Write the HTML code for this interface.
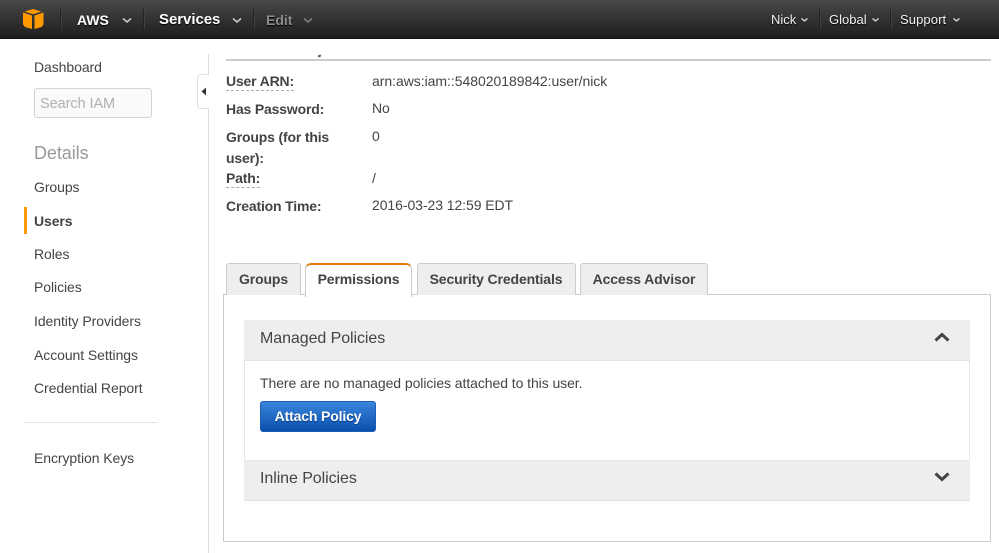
<!DOCTYPE html>
<html><head><meta charset="utf-8"><title>IAM</title>
<style>
html,body{margin:0;padding:0;background:#fff}
#p{position:relative;width:999px;height:553px;overflow:hidden;background:#fff;font-family:"Liberation Sans",Arial,sans-serif;font-size:14px;color:#444;letter-spacing:-.07px}
#p div{position:absolute;white-space:nowrap}
.t{line-height:16px}
.nav{height:38px;left:0;top:0;width:999px;background:linear-gradient(#4a4a4a 0,#3b3b3b 30%,#2a2a2a 70%,#1e1e1e 100%);border-bottom:1px solid #111}
.n{color:#fff;font-weight:bold;text-shadow:0 1px 1px #000;line-height:16px}
.r{color:#f2f2f2;font-size:13px;line-height:16px;text-shadow:0 1px 1px #000}
.sep{width:1px;top:9px;height:20px;background:#232323;border-right:1px solid #404040}
.s{left:34px;color:#444;line-height:16px}
.l{left:226px;font-weight:bold;color:#444;line-height:16px;letter-spacing:-.17px}
.v{left:372px;color:#444;line-height:16px}
.tab{top:263px;height:31px;background:#eee;border:1px solid #ccc;border-bottom:0;border-radius:3px 3px 0 0;text-align:center;font-weight:bold;line-height:30px;color:#444;letter-spacing:-.13px}
.dash{height:0;border-bottom:1px dashed #aaa}
svg{position:absolute}
</style></head><body><div id="p">

<div class="nav"></div>
<svg style="left:22px;top:8px" width="22" height="22" viewBox="22 8 22 22"><path d="M33 9 41.500 11.500 33 14.300 24.500 11.500Z" fill="#f90"/><path d="M23 12.500 32 15.500V29L25 27 23 24.500Z" fill="#f90"/><path d="M43.500 12.500 34.500 15.500V29L41.500 27 43.500 24.500Z" fill="#f90"/></svg>
<div class="sep" style="left:60px"></div>
<div class="n" style="left:77px;top:12px;letter-spacing:0">AWS</div>
<svg style="left:122px;top:17px" width="10" height="7" viewBox="0 0 10 7"><path d="M1 1.500 5 5 9 1.500" fill="none" stroke="#ccc" stroke-width="1.500"/></svg>
<div class="sep" style="left:143px"></div>
<div class="n" style="left:159px;top:12px;font-size:15px;letter-spacing:-.05px">Services</div>
<svg style="left:232px;top:17px" width="10" height="7" viewBox="0 0 10 7"><path d="M1 1.500 5 5 9 1.500" fill="none" stroke="#ccc" stroke-width="1.500"/></svg>
<div class="sep" style="left:253px"></div>
<div class="n" style="left:266px;top:12px;color:#8b8b8b;letter-spacing:0">Edit</div>
<svg style="left:303px;top:17px" width="10" height="7" viewBox="0 0 10 7"><path d="M1 1.500 5 5 9 1.500" fill="none" stroke="#808080" stroke-width="1.500"/></svg>

<div class="r" style="left:771px;top:12px;letter-spacing:0">Nick</div>
<svg style="left:801px;top:18px" width="7" height="4" viewBox="0 0 7 4"><path d="M0.500 0.500 3.500 3 6.500 0.500" fill="none" stroke="#e5e5e5" stroke-width="1.200"/></svg>
<div class="sep" style="left:819px"></div>
<div class="r" style="left:829px;top:12px;letter-spacing:0">Global</div>
<svg style="left:872px;top:18px" width="7" height="4" viewBox="0 0 7 4"><path d="M0.500 0.500 3.500 3 6.500 0.500" fill="none" stroke="#e5e5e5" stroke-width="1.200"/></svg>
<div class="sep" style="left:890px"></div>
<div class="r" style="left:900px;top:12px;letter-spacing:.1px">Support</div>
<svg style="left:953px;top:18px" width="7" height="4" viewBox="0 0 7 4"><path d="M0.500 0.500 3.500 3 6.500 0.500" fill="none" stroke="#e5e5e5" stroke-width="1.200"/></svg>

<div style="left:208px;top:54px;width:1px;height:499px;background:#ddd"></div>
<div style="left:197px;top:74px;width:11px;height:33px;background:#fff;border:1px solid #e2e2e2;border-right:0;border-radius:4px 0 0 4px"></div>
<svg style="left:201px;top:87px" width="6" height="9" viewBox="0 0 6 9"><path d="M5 0.500V8.500L0.500 4.500Z" fill="#333"/></svg>

<div class="s" style="top:59px">Dashboard</div>
<div style="left:34px;top:88px;width:116px;height:28px;border:1px solid #d4d4d4;border-radius:3px;background:#fafafa"></div>
<div class="t" style="left:40px;top:96px;color:#b0b0b0;font-size:14.500px">Search IAM</div>
<div class="t" style="left:34px;top:144px;color:#999;font-size:18px;line-height:18px">Details</div>
<div class="s" style="top:179px">Groups</div>
<div style="left:24px;top:207px;width:3px;height:27px;background:#f90"></div>
<div class="s" style="top:213px;font-weight:bold;letter-spacing:-.1px">Users</div>
<div class="s" style="top:246px">Roles</div>
<div class="s" style="top:279px">Policies</div>
<div class="s" style="top:313px">Identity Providers</div>
<div class="s" style="top:347px">Account Settings</div>
<div class="s" style="top:380px">Credential Report</div>
<div style="left:24px;top:422px;width:133px;height:0;border-top:1px dotted #ccc"></div>
<div class="s" style="top:450px">Encryption Keys</div>

<div style="left:226px;top:59px;width:765px;height:2px;background:#ccc"></div>
<div style="left:318px;top:55px;width:3px;height:2px;background:#555;transform:rotate(-25deg)"></div>

<div class="l" style="top:73px">User ARN:</div>
<div class="dash" style="left:226px;top:90px;width:68px"></div>
<div class="v" style="top:73px;letter-spacing:-.04px">arn:aws:iam::548020189842:user/nick</div>
<div class="l" style="top:101px">Has Password:</div>
<div class="v" style="top:100px">No</div>
<div class="l" style="top:129px">Groups (for this</div>
<div class="v" style="top:128px">0</div>
<div class="l" style="top:150px">user):</div>
<div class="l" style="top:170px">Path:</div>
<div class="dash" style="left:226px;top:187px;width:34px"></div>
<div class="v" style="top:170px">/</div>
<div class="l" style="top:198px">Creation Time:</div>
<div class="v" style="top:197px">2016-03-23 12:59 EDT</div>

<div style="left:223px;top:294px;width:766px;height:246px;border:1px solid #ccc;background:#fff"></div>
<div class="tab" style="left:226px;width:73px">Groups</div>
<div class="tab" style="left:305px;width:105px;height:30px;background:#fff;border-top:2px solid #e47911;line-height:28px;border-radius:6px 6px 0 0;padding-bottom:2px">Permissions</div>
<div class="tab" style="left:417px;width:157px;text-indent:-1px">Security Credentials</div>
<div class="tab" style="left:580px;width:126px">Access Advisor</div>

<div style="left:244px;top:320px;width:724px;height:180px;border:1px solid #e8e8e8;border-top:0;border-bottom:0;background:#fff"></div>
<div style="left:244px;top:320px;width:726px;height:40px;background:#eee;border-bottom:1px solid #e2e2e2"></div>
<div class="t" style="left:260px;top:330px;font-size:16px;line-height:18px;color:#444">Managed Policies</div>
<svg style="left:934px;top:331px" width="16" height="12" viewBox="0 0 16 12"><path d="M1.500 9.500 8 3.500 14.500 9.500" fill="none" stroke="#444" stroke-width="3"/></svg>
<div class="t" style="left:260px;top:375px;color:#444">There are no managed policies attached to this user.</div>
<div style="left:260px;top:401px;width:114px;height:29px;border:1px solid #1a5fb4;border-radius:3px;background:linear-gradient(#3a85dc,#0a50ae)"></div>
<div class="t" style="left:260px;top:408px;width:116px;text-align:center;color:#fff;font-weight:bold;letter-spacing:-.15px;text-shadow:0 1px 1px #0a3a80">Attach Policy</div>
<div style="left:244px;top:460px;width:726px;height:41px;background:#eee;border-top:1px solid #e6e6e6;border-bottom:1px solid #e2e2e2;box-sizing:border-box"></div>
<div class="t" style="left:260px;top:470px;font-size:16px;line-height:18px;color:#444">Inline Policies</div>
<svg style="left:934px;top:471px" width="16" height="12" viewBox="0 0 16 12"><path d="M1.500 2.500 8 8.500 14.500 2.500" fill="none" stroke="#444" stroke-width="3"/></svg>

</div></body></html>
